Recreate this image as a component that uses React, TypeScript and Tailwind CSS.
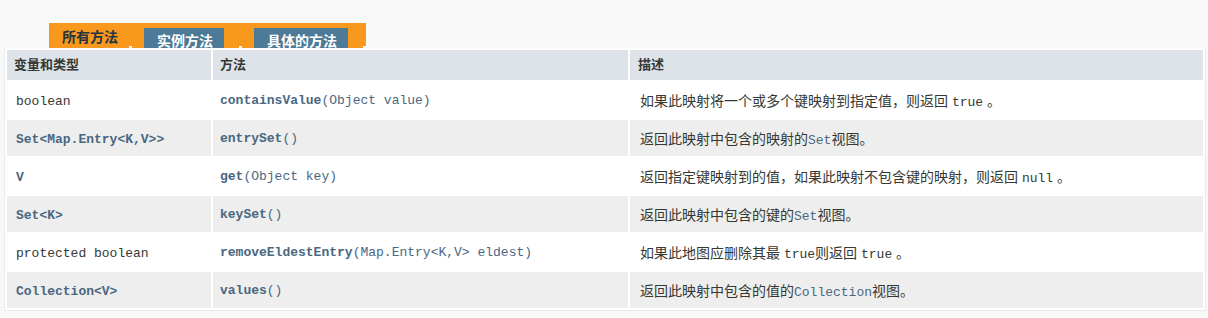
import type { ReactNode } from 'react';

const mono = "font-['Liberation_Mono','Courier_New',monospace]";
const sans = "font-['Liberation_Sans','Noto_Sans_CJK_SC',sans-serif]";

type Row = {
  type: ReactNode;
  method: ReactNode;
  desc: ReactNode;
};

function L({ children, bold = true }: { children: ReactNode; bold?: boolean }) {
  return <span className={`text-[#4a6782] ${bold ? 'font-bold' : ''}`}>{children}</span>;
}

function Code({ children, link = false }: { children: ReactNode; link?: boolean }) {
  return (
    <code className={`${mono} text-[13px] ${link ? 'text-[#4a6782]' : 'text-[#353833]'}`}>
      {children}
    </code>
  );
}

function Method({ name, args }: { name: string; args: string }) {
  return (
    <>
      <L>{name}</L>
      <span className="text-[#4a6782]">{args}</span>
    </>
  );
}

const rows: Row[] = [
  {
    type: <span className="text-[#353833]">boolean</span>,
    method: <Method name="containsValue" args="(Object value)" />,
    desc: (
      <>
        如果此映射将一个或多个键映射到指定值，则返回 <Code>true</Code> 。
      </>
    ),
  },
  {
    type: <L>{'Set<Map.Entry<K,V>>'}</L>,
    method: <Method name="entrySet" args="()" />,
    desc: (
      <>
        返回此映射中包含的映射的<Code link>Set</Code>视图。
      </>
    ),
  },
  {
    type: <L>V</L>,
    method: <Method name="get" args="(Object key)" />,
    desc: (
      <>
        返回指定键映射到的值，如果此映射不包含键的映射，则返回 <Code>null</Code> 。
      </>
    ),
  },
  {
    type: <L>{'Set<K>'}</L>,
    method: <Method name="keySet" args="()" />,
    desc: (
      <>
        返回此映射中包含的键的<Code link>Set</Code>视图。
      </>
    ),
  },
  {
    type: <span className="text-[#353833]">protected boolean</span>,
    method: <Method name="removeEldestEntry" args="(Map.Entry<K,V> eldest)" />,
    desc: (
      <>
        如果此地图应删除其最 <Code>true</Code>则返回 <Code>true</Code> 。
      </>
    ),
  },
  {
    type: <L>{'Collection<V>'}</L>,
    method: <Method name="values" args="()" />,
    desc: (
      <>
        返回此映射中包含的值的<Code link>Collection</Code>视图。
      </>
    ),
  },
];

export default function App() {
  return (
    <div className={`min-h-screen bg-[#f8f8f8] pt-[23px] ${sans}`}>
      {/* Tab strip */}
      <div className="ml-[49px] flex h-[25px] w-[317px] items-start overflow-hidden bg-[#f8981d]">
        <span className="mt-[4px] w-[80px] pl-[13px] text-[14px] leading-[20px] font-bold text-[#253441]">
          所有方法
        </span>
        <span className="h-[2px] w-[3px] self-end bg-white" />
        <span className="w-[12px]" />
        <span className="mt-[5px] h-[20px] w-[80px] overflow-hidden bg-[#4d7a97] pt-[3px] pl-[13px] text-[14px] leading-[20px] font-bold text-white">
          实例方法
        </span>
        <span className="w-[15px]" />
        <span className="h-[2px] w-[3px] self-end bg-white" />
        <span className="w-[12px]" />
        <span className="mt-[5px] h-[20px] w-[94px] overflow-hidden bg-[#4d7a97] pt-[3px] pl-[13px] text-[14px] leading-[20px] font-bold text-white">
          具体的方法
        </span>
        <span className="w-[15px]" />
        <span className="h-[2px] w-[3px] self-end bg-white" />
      </div>

      {/* Summary table */}
      <div className="ml-[4px] w-[1202px] border border-t-0 border-[#ebebeb] bg-white p-[2px]">
        <div className="grid grid-cols-[204px_415px_573px] gap-[2px]">
          <div className="flex h-[30px] items-center bg-[#dee3e9] pl-[7px] text-[13px] font-bold text-[#353833]">
            变量和类型
          </div>
          <div className="flex h-[30px] items-center bg-[#dee3e9] pl-[7px] text-[13px] font-bold text-[#353833]">
            方法
          </div>
          <div className="flex h-[30px] items-center bg-[#dee3e9] pl-[8px] text-[13px] font-bold text-[#353833]">
            描述
          </div>

          {rows.map((r, i) => {
            const bg = i % 2 === 0 ? 'bg-white' : 'bg-[#eeeeee]';
            return (
              <div key={i} className="contents">
                <div className={`flex h-[36px] items-center ${bg} pt-[3px] pl-[9px] ${mono} text-[13px] whitespace-pre`}>
                  {r.type}
                </div>
                <div className={`flex h-[36px] items-center ${bg} pt-[2px] pl-[7px] ${mono} text-[13px] whitespace-pre`}>
                  {r.method}
                </div>
                <div className={`flex h-[36px] items-center ${bg} pt-[4px] pl-[10px] text-[14px] text-[#353833] whitespace-pre`}>
                  <span>{r.desc}</span>
                </div>
              </div>
            );
          })}
        </div>
      </div>
    </div>
  );
}
